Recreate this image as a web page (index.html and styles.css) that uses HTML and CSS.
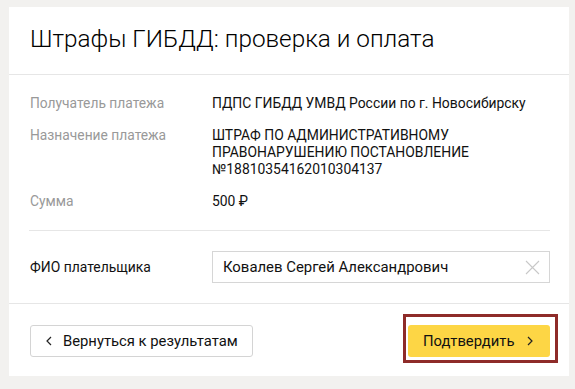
FILE: index.html
```html
<!DOCTYPE html>
<html lang="ru">
<head>
<meta charset="utf-8">
<title>Штрафы ГИБДД</title>
<link rel="stylesheet" href="styles.css">
</head>
<body>
<div class="card">
  <div class="card-head">
    <h1 class="title">Штрафы ГИБДД: проверка и оплата</h1>
  </div>
  <div class="details">
    <div class="row">
      <div class="label">Получатель платежа</div>
      <div class="value">ПДПС ГИБДД УМВД России по г. Новосибирску</div>
    </div>
    <div class="row">
      <div class="label">Назначение платежа</div>
      <div class="value">ШТРАФ ПО АДМИНИСТРАТИВНОМУ<br>ПРАВОНАРУШЕНИЮ ПОСТАНОВЛЕНИЕ<br>№18810354162010304137</div>
    </div>
    <div class="row">
      <div class="label">Сумма</div>
      <div class="value">500 ₽</div>
    </div>
  </div>
  <div class="payer">
    <div class="payer-label">ФИО плательщика</div>
    <div class="input">
      <span class="input-text">Ковалев Сергей Александрович</span>
      <svg class="clear" width="15" height="15" viewBox="0 0 15 15"><path d="M1 1 L14 14 M14 1 L1 14" stroke="#c8c8c8" stroke-width="1.1" fill="none"/></svg>
    </div>
  </div>
  <div class="footer">
    <button class="btn btn-back">
      <svg class="chev" width="6" height="10" viewBox="0 0 6 10"><path d="M5 1 L1 5 L5 9" stroke="#222" stroke-width="1.2" fill="none"/></svg>
      <span>Вернуться к результатам</span>
    </button>
    <div class="confirm-wrap">
      <button class="btn btn-confirm">
        <span>Подтвердить</span>
        <svg class="chev" width="6" height="10" viewBox="0 0 6 10"><path d="M1 1 L5 5 L1 9" stroke="#222" stroke-width="1.2" fill="none"/></svg>
      </button>
    </div>
  </div>
</div>
</body>
</html>
```

FILE: styles.css
```css
* { box-sizing: border-box; }
html, body { margin: 0; padding: 0; }
body {
  background: #f2f1ef;
  font-family: Roboto, "Liberation Sans", sans-serif;
  color: #111;
  width: 575px;
  height: 389px;
  overflow: hidden;
}
.card {
  margin: 7px 0 0 9px;
  width: 560px;
  background: #fff;
}
.card-head {
  height: 68px;
  padding: 16px 0 0 21px;
  border-bottom: 1px solid #e6e6e6;
}
.title {
  margin: 0;
  font-size: 24.3px;
  font-weight: 300;
  line-height: 32px;
  color: #000;
}
.details {
  margin: 0 19px 0 20px;
  padding: 20px 0 20px 0;
  border-bottom: 1px solid #e6e6e6;
  display: flex;
  flex-direction: column;
  gap: 15px;
}
.row {
  display: flex;
  line-height: 17px;
}
.label {
  width: 183px;
  flex: none;
  padding-left: 1px;
  font-size: 13.8px;
  color: #999;
}
.value {
  font-size: 13.9px;
  color: #111;
}
.payer {
  display: flex;
  align-items: center;
  padding: 20px 19px 20px 21px;
  border-bottom: 1px solid #e6e6e6;
}
.payer-label {
  width: 182px;
  flex: none;
  font-size: 13.9px;
  color: #111;
}
.input {
  flex: 1;
  height: 32px;
  border: 1px solid #d6d6d6;
  display: flex;
  align-items: center;
  justify-content: space-between;
  padding: 0 9px 0 10px;
}
.input-text {
  font-size: 14.9px;
  color: #111;
}
.clear { display: block; }
.footer {
  display: flex;
  justify-content: space-between;
  align-items: center;
  padding: 21px 19px 19px 21px;
}
.btn {
  height: 32px;
  font-family: inherit;
  font-size: 14.8px;
  color: #111;
  display: flex;
  align-items: center;
  border-radius: 3px;
  cursor: pointer;
}
.btn-back {
  width: 223px;
  background: #fff;
  border: 1px solid #d4d4d4;
  padding: 0 0 0 15px;
  gap: 11px;
}
.confirm-wrap {
  position: relative;
}
.confirm-wrap::before {
  content: "";
  position: absolute;
  left: -5px;
  right: -8px;
  top: -11px;
  bottom: -6px;
  border: 3px solid #8e2b29;
  pointer-events: none;
}
.btn-confirm {
  width: 142px;
  background: #fdd645;
  border: none;
  padding: 0 0 0 15px;
  gap: 12px;
}
.chev { display: block; }
```
